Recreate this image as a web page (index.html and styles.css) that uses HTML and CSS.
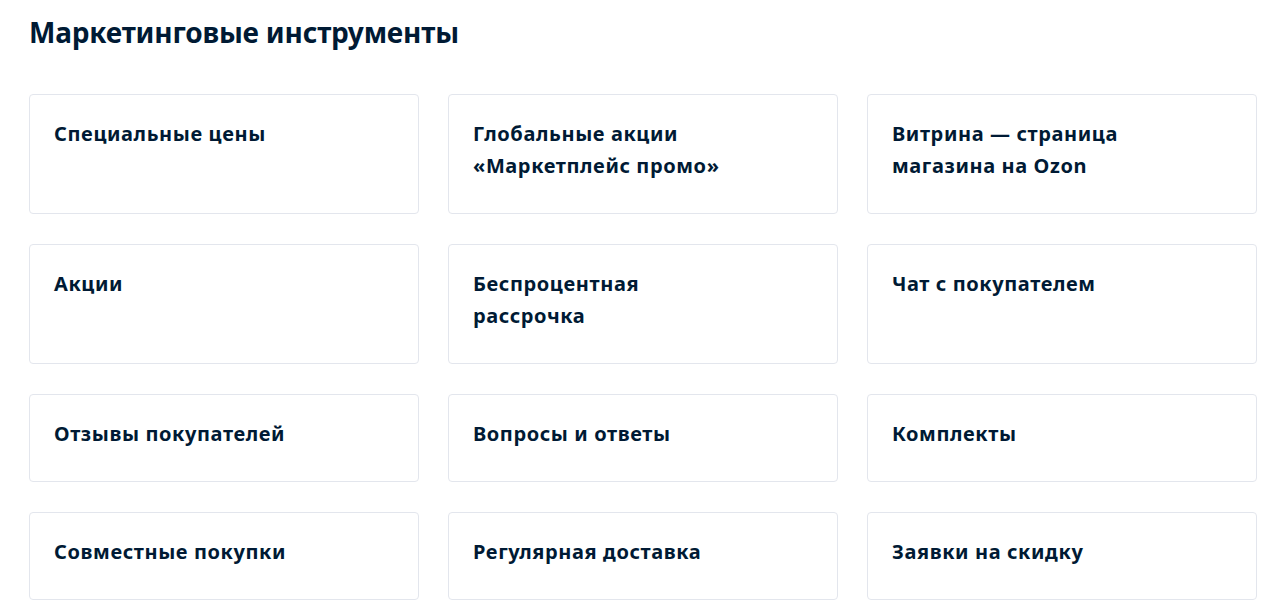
FILE: index.html
```html
<!DOCTYPE html>
<html lang="ru">
<head>
<meta charset="utf-8">
<link rel="stylesheet" href="styles.css">
</head>
<body>
<main class="page">
  <h1 class="title">Маркетинговые инструменты</h1>
  <div class="grid">
    <div class="card"><span class="card-text">Специальные цены</span></div>
    <div class="card"><span class="card-text">Глобальные акции<br>«Маркетплейс промо»</span></div>
    <div class="card"><span class="card-text">Витрина — страница<br>магазина на Ozon</span></div>
    <div class="card"><span class="card-text">Акции</span></div>
    <div class="card"><span class="card-text">Беспроцентная<br>рассрочка</span></div>
    <div class="card"><span class="card-text">Чат с покупателем</span></div>
    <div class="card"><span class="card-text">Отзывы покупателей</span></div>
    <div class="card"><span class="card-text">Вопросы и ответы</span></div>
    <div class="card"><span class="card-text">Комплекты</span></div>
    <div class="card"><span class="card-text">Совместные покупки</span></div>
    <div class="card"><span class="card-text">Регулярная доставка</span></div>
    <div class="card"><span class="card-text">Заявки на скидку</span></div>
  </div>
</main>
</body>
</html>
```

FILE: styles.css
```css
* { box-sizing: border-box; }
html, body { margin: 0; padding: 0; background: #ffffff; }
body {
  font-family: "Noto Sans", "DejaVu Sans", sans-serif;
  color: #001a34;
}
.page {
  width: 1257px;
  padding: 12px 0 0 29px;
}
.title {
  margin: 0;
  font-size: 28px;
  line-height: 40px;
  font-weight: 700;
  letter-spacing: -0.2px;
}
.grid {
  margin-top: 42px;
  display: grid;
  grid-template-columns: repeat(3, 1fr);
  column-gap: 29px;
  row-gap: 30px;
}
.card {
  border: 1px solid #e3e6ed;
  border-radius: 4px;
  padding: 23px 24px 31px 24px;
}
.card-text {
  display: block;
  font-size: 20px;
  line-height: 32px;
  font-weight: 700;
  letter-spacing: 0.6px;
}
```
